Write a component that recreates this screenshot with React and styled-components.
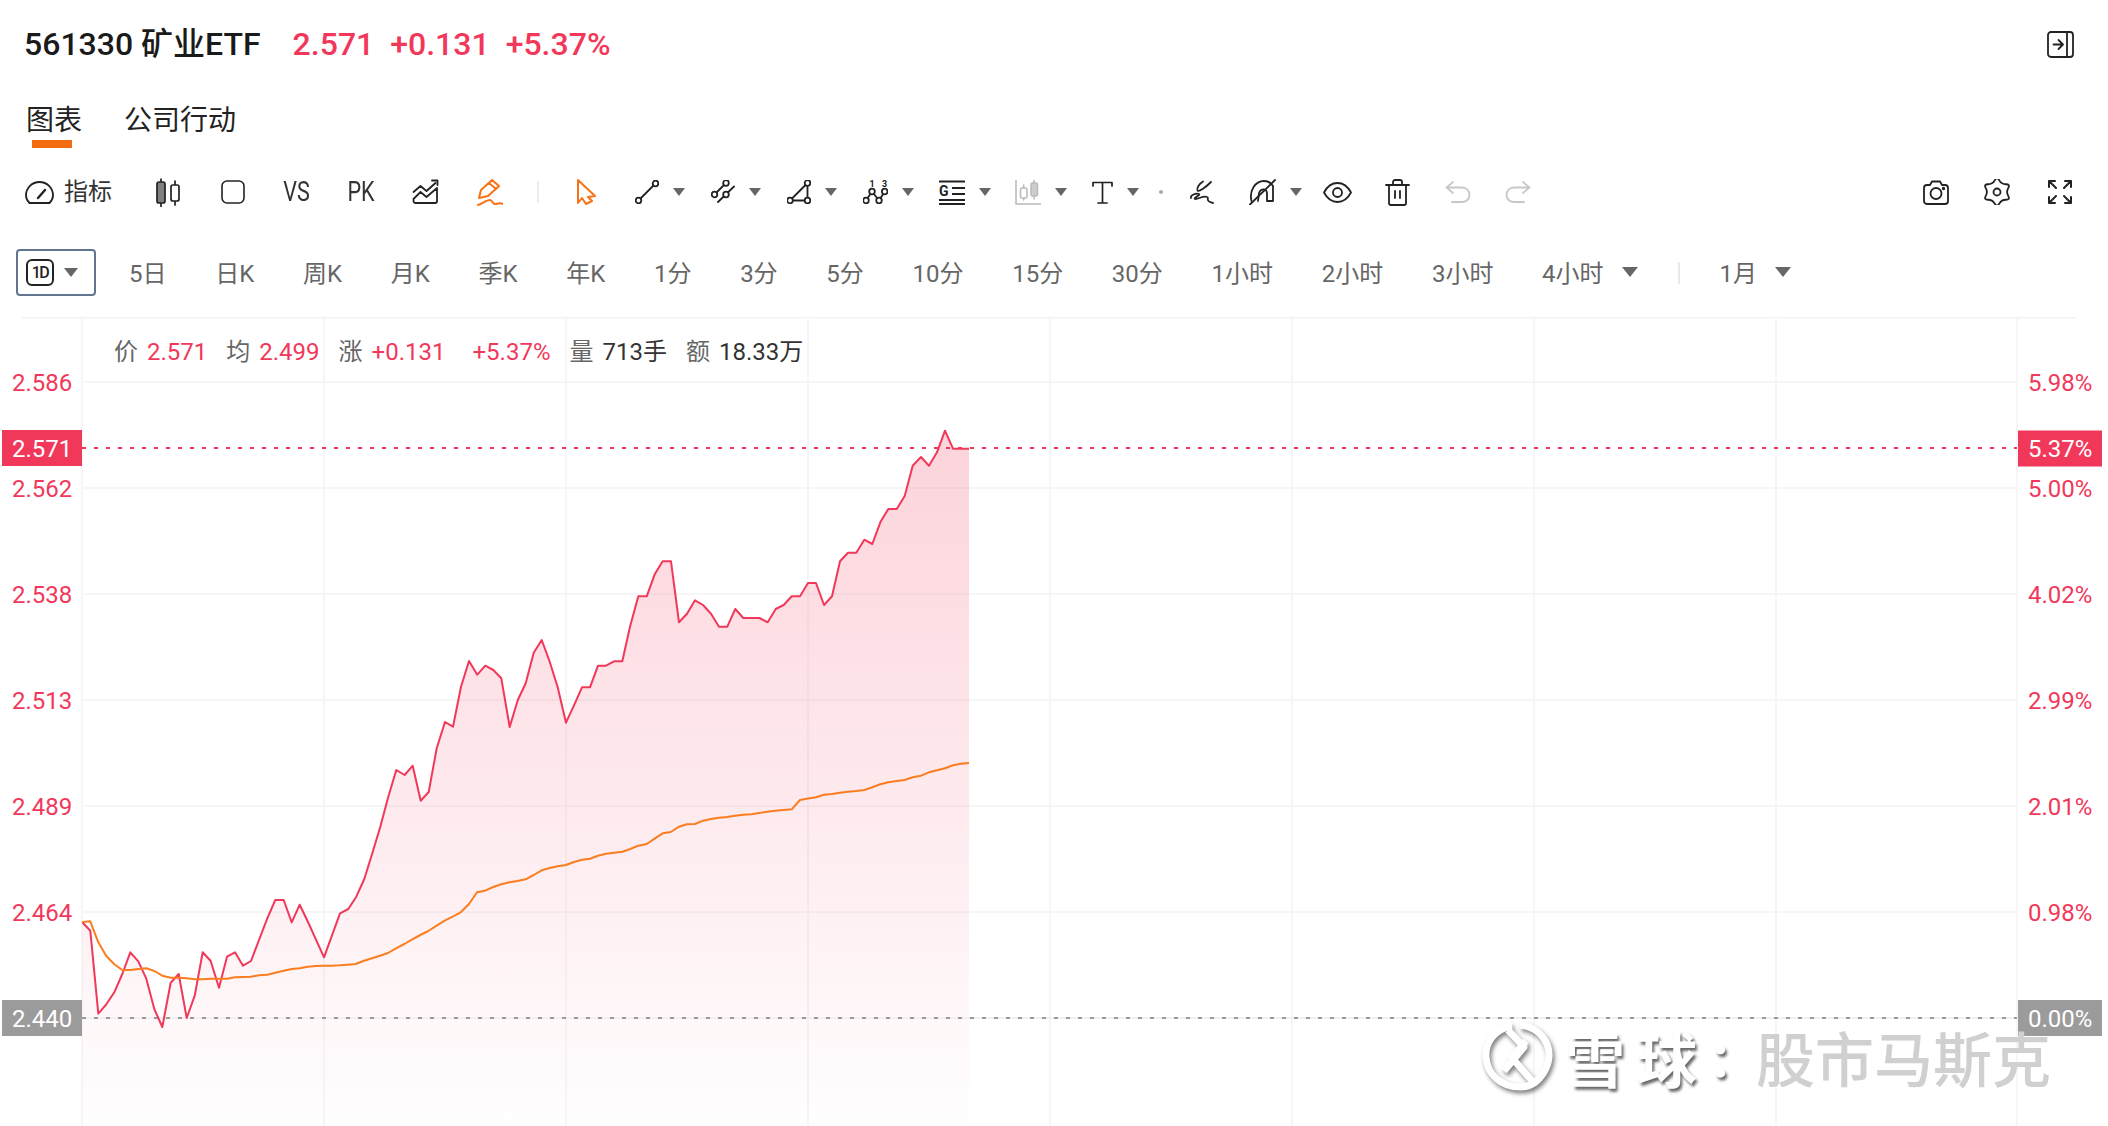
import React from 'react';
import styled, { createGlobalStyle } from 'styled-components';

const RED = '#f2385a';
const ORANGE = '#f97316';
const INK = '#222';
const MUTED = '#666';
const GRID = '#f3f3f3';

const GlobalStyle = createGlobalStyle`
  html, body {
    margin: 0;
    background: #fff;
  }
  body {
    font-family: Roboto, 'Noto Sans CJK SC', sans-serif;
    color: ${INK};
  }
`;

// chart data, read off the picture as x,y in page pixels
const fromCrop = (ox, oy, pts) => pts.map(([x, y]) => [ox + x / 3, oy + y / 3]);

const PRICE = [
  ...fromCrop(0, 820, [[247,307],[271,332],[295,581],[319,553],[343,517],[367,462],[391,397],[415,424],[439,476],[463,567],[487,621],[512,488],[536,462],[560,594],[584,527],[608,397],[632,423],[657,503],[681,410],[705,397],[729,437],[753,423],[777,360],[802,295],[826,240],[851,240],[875,307],[899,254]]),
  ...fromCrop(300, 560, [[24,1086],[48,1139],[72,1192],[120,1060],[145,1047],[169,1010],[193,957],[217,880],[241,800],[265,710],[289,630],[314,645],[338,617],[362,722],[386,696],[410,565],[435,486],[459,500],[483,380],[507,303],[532,344],[556,317],[580,330],[604,355],[629,501],[653,421],[677,370],[701,278],[725,240],[749,305],[773,382],[798,488],[822,436],[846,382],[870,382],[894,317],[918,317],[942,304],[967,304]]),
  ...fromCrop(620, 400, [[30,680],[55,589],[80,589],[104,523],[128,484],[153,484],[177,667],[201,641],[225,601],[249,615],[273,641],[297,680],[322,680],[346,627],[370,654],[394,654],[418,654],[443,667],[467,627],[491,615],[515,589],[540,589],[564,549],[588,549],[612,615],[636,589],[660,484],[684,458],[709,458],[733,419],[757,432],[781,367],[805,327],[830,327],[854,288],[878,197],[903,171],[927,197],[951,157],[975,92],[999,146],[1023,146],[1047,146]]),
];

const AVERAGE = [
  ...fromCrop(0, 820, [[247,306],[271,304],[295,367],[319,408],[343,433],[367,450],[391,450],[415,447],[439,445],[463,453],[487,467],[512,473],[536,473],[560,475],[584,478],[608,478],[632,476],[657,476],[681,476],[705,472],[729,471],[753,470],[777,466],[802,464],[826,458],[851,452],[875,447],[899,445],[923,440],[947,438],[971,437],[995,437],[1019,436],[1043,434],[1067,432],[1092,422],[1116,415],[1140,407],[1164,399],[1188,385],[1213,372],[1237,358],[1261,345],[1285,333],[1310,317],[1334,302],[1358,290],[1382,277],[1407,252]]),
  ...fromCrop(300, 560, [[531,997],[555,992],[580,981],[604,973],[628,967],[652,963],[677,958],[701,945],[725,931],[749,924],[773,919],[798,915],[822,906],[846,899],[870,896],[894,887],[918,881],[942,878],[967,875],[991,867],[1015,857],[1040,852],[1064,836],[1088,820],[1112,816],[1137,800],[1161,793],[1185,792],[1209,782],[1233,777],[1257,773],[1281,771],[1305,767],[1330,764],[1354,763],[1378,759],[1402,755],[1426,752],[1451,750],[1475,748]]),
  ...fromCrop(620, 400, [[540,1200],[560,1196],[588,1192],[612,1184],[636,1182],[660,1178],[684,1175],[709,1173],[733,1170],[757,1162],[781,1153],[805,1147],[830,1143],[854,1140],[878,1132],[903,1127],[927,1117],[951,1111],[975,1105],[999,1096],[1023,1091],[1047,1089]]),
];

const toPath = (pts) => pts.map(([x, y], i) => `${i ? 'L' : 'M'}${x.toFixed(1)} ${y.toFixed(1)}`).join('');

const H_LINES = [382, 488, 594, 700, 806, 912];
const V_LINES = [82, 324, 566, 808, 1050, 1292, 1534, 1776, 2017];
const LEFT_LABELS = [['2.586', 382], ['2.562', 488], ['2.538', 594], ['2.513', 700], ['2.489', 806], ['2.464', 912]];
const RIGHT_LABELS = [['5.98%', 382], ['5.00%', 488], ['4.02%', 594], ['2.99%', 700], ['2.01%', 806], ['0.98%', 912]];
const PERIODS = ['5日', '日K', '周K', '月K', '季K', '年K', '1分', '3分', '5分', '10分', '15分', '30分', '1小时', '2小时', '3小时'];

const Page = styled.div`
  width: 2108px;
  height: 1126px;
  overflow: hidden;
  background: #fff;
`;

const Header = styled.header`
  display: flex;
  align-items: center;
  height: 88px;
  padding: 0 34px 0 24px;
`;

const Title = styled.h1`
  margin: 0;
  font-size: 32px;
  font-weight: 500;
  line-height: 40px;
  height: 40px;
  color: #1a1a1a;
`;

const Quote = styled.div`
  display: flex;
  gap: 16px;
  margin-left: 32px;
  font-size: 32px;
  font-weight: 500;
  line-height: 40px;
  color: ${RED};
`;

const PanelButton = styled.div`
  display: flex;
  margin-left: auto;
`;

const Tabs = styled.nav`
  display: flex;
  gap: 42px;
  height: 49px;
  padding: 13px 0 0 26px;
`;

const Tab = styled.div`
  position: relative;
  height: 39px;
  font-size: 28px;
  line-height: 40px;
  color: ${INK};

  ${(p) =>
    p.$active &&
    `
    &::after {
      content: '';
      position: absolute;
      left: 6px;
      right: 10px;
      top: 39px;
      height: 8px;
      background: #f36d10;
    }
  `}
`;

const Toolbar = styled.div`
  display: flex;
  align-items: center;
  height: 56px;
  margin-top: 14px;
  padding: 0 16px 0 25px;
`;

const IndicatorButton = styled.div`
  display: flex;
  align-items: center;
  gap: 10px;
  width: 111px;
  font-size: 24px;
  line-height: 32px;
  color: #333;
`;

const IndicatorLabel = styled.span`
  margin-bottom: 1px;
`;

const ToolButton = styled.div`
  display: flex;
  align-items: center;
  justify-content: center;
  flex: none;
  width: ${(p) => p.$w || 61}px;
`;

const ToolText = styled.span`
  font-size: 27px;
  line-height: 32px;
  color: #333;
  transform: scaleX(0.8);
`;

const DropButton = styled.div`
  display: flex;
  align-items: center;
  flex: none;
  gap: 14px;
  width: ${(p) => p.$w || 76}px;
  padding-left: ${(p) => p.$pad || 13}px;
  box-sizing: border-box;
`;

const Caret = styled.span`
  flex: none;
  width: 0;
  height: 0;
  border-left: ${(p) => p.$size || 6}px solid transparent;
  border-right: ${(p) => p.$size || 6}px solid transparent;
  border-top: ${(p) => (p.$size || 6) + 2}px solid ${MUTED};
`;

const ToolDivider = styled.span`
  flex: none;
  width: 2px;
  height: 22px;
  margin: 0 10.5px 0 15px;
  background: #eee;
`;

const Dot = styled.span`
  flex: none;
  width: 4px;
  height: 4px;
  margin: 0 2.6px 0 4.5px;
  border-radius: 50%;
  background: #aaa;
`;

const RightTools = styled.div`
  display: flex;
  align-items: center;
  margin-left: auto;
`;

const PeriodBar = styled.div`
  display: flex;
  align-items: center;
  height: 47px;
  margin-top: 29px;
  padding-left: 16px;
  font-size: 24px;
  color: ${MUTED};
`;

const RangeBox = styled.div`
  display: flex;
  align-items: center;
  gap: 10px;
  width: 80px;
  height: 47px;
  margin-right: 33px;
  padding-left: 8px;
  box-sizing: border-box;
  border: 2px solid #62758f;
  border-radius: 4px;
`;

const DayBadge = styled.span`
  display: flex;
  align-items: center;
  justify-content: center;
  width: 28px;
  height: 27px;
  box-sizing: border-box;
  border: 2px solid ${INK};
  border-radius: 6px;
  font-size: 16px;
  font-weight: 500;
  letter-spacing: -1.5px;
  color: ${INK};
`;

const PeriodList = styled.div`
  display: flex;
  align-items: center;
  gap: 48.7px;
  margin-bottom: 2px;
`;

const PeriodMenu = styled.div`
  display: flex;
  align-items: center;
  gap: 18px;
  margin-bottom: ${(p) => p.$lift || 0}px;
`;

const PeriodDivider = styled.span`
  width: 2px;
  height: 22px;
  margin: 0 40px;
  background: #eaeaea;
`;

const Chart = styled.section`
  position: relative;
  height: 809px;
  margin-top: 21px;
`;

const ChartSvg = styled.svg`
  display: block;
`;

const AxisText = styled.text`
  font-family: Roboto, sans-serif;
  font-size: 24px;
  fill: ${(p) => p.$color || RED};
`;

const Legend = styled.div`
  position: absolute;
  left: 114px;
  top: 18px;
  display: flex;
  gap: 19px;
  font-size: 24px;
  line-height: 34px;
  color: ${MUTED};
`;

const LegendItem = styled.span`
  display: flex;
  gap: 9px;
  margin-left: ${(p) => p.$offset || 0}px;
`;

const LegendValue = styled.span`
  color: ${(p) => (p.$up ? RED : '#333')};
`;

const Watermark = styled.div`
  position: absolute;
  left: 1482px;
  top: 704px;
  display: flex;
  align-items: center;
  height: 70px;
  font-size: 60px;
  font-weight: 700;
  white-space: nowrap;
`;

const WatermarkBrand = styled.span`
  margin-left: 12px;
  letter-spacing: 12px;
  color: #fff;
  text-shadow: 2px 3px 3px rgba(0, 0, 0, 0.6);
`;

const WatermarkColon = styled.span`
  margin-left: 3px;
  color: #fff;
  text-shadow: 2px 3px 3px rgba(0, 0, 0, 0.6);
`;

const WatermarkName = styled.span`
  margin-left: 27px;
  font-size: 59px;
  font-weight: 500;
  color: #d0d0d0;
`;

const LogoSvg = styled.svg`
  flex: none;
  filter: drop-shadow(2px 3px 2px rgba(0, 0, 0, 0.5));
`;

const Icon = ({ w, h, color = INK, sw = 1.8, children }) => (
  <svg width={w} height={h} viewBox={`0 0 ${w} ${h}`} fill="none" stroke={color} strokeWidth={sw} strokeLinecap="round" strokeLinejoin="round">
    {children}
  </svg>
);

const PanelIcon = () => (
  <Icon w={27} h={27}>
    <rect x="1" y="1" width="25" height="25" rx="3" />
    <path d="M20 1v25M6.5 13.5h9M11.5 9l4.5 4.5-4.5 4.5" />
  </Icon>
);

const GaugeIcon = () => (
  <Icon w={29} h={23}>
    <path d="M4.5 22C2.500 20 1 17.500 1 14.500a13.500 13.500 0 0 1 27 0c0 3-1.500 5.500-3.500 7.500z" />
    <path d="M13 17l7-8" strokeWidth="2.400" />
  </Icon>
);

const CandleIcon = ({ color = INK, fill = '#808080' }) => (
  <Icon w={24} h={29} color={color} sw={1.7}>
    <path d="M5 1v28M19 3v24" />
    <rect x="1" y="4" width="8" height="21" rx="2" fill={fill} />
    <rect x="15" y="7" width="8" height="16" rx="2" fill="#fff" />
  </Icon>
);

const SquareIcon = () => (
  <Icon w={24} h={24} sw={1.6}>
    <rect x="1" y="1" width="22" height="22" rx="5" />
  </Icon>
);

const TrendIcon = () => (
  <Icon w={27} h={26}>
    <path d="M1.500 13l7-6 6 5 9-8M20 1.500h5.500V6" />
    <path d="M1.500 20l7-7 6 5 10.500-9v13a2 2 0 0 1-2 2H3.500a2 2 0 0 1-2-2z" />
  </Icon>
);

const PenIcon = () => (
  <Icon w={26} h={27} color={ORANGE} sw={2}>
    <path d="M2 19l2-8L15 1l7 6-11 10zM12 4l7 6" />
    <path d="M1 26c4-1 8-5 12-5 3 0 2 4 5 4s6-2 8 0" />
  </Icon>
);

const CursorIcon = () => (
  <Icon w={19} h={26} color={ORANGE} sw={2}>
    <path d="M1 1l17 16-7 1 4 4-6 3-4-6-4 5z" />
  </Icon>
);

const Node = ({ x, y }) => <circle cx={x} cy={y} r="2.800" fill="#fff" />;

const LineIcon = () => (
  <Icon w={24} h={24}>
    <path d="M3.500 20.500l17-17" />
    <Node x={3.5} y={20.5} />
    <Node x={20.5} y={3.5} />
  </Icon>
);

const ParallelIcon = () => (
  <Icon w={24} h={24}>
    <path d="M3.500 14.500L15 3M7 22L23 6.500" />
    <Node x={3.5} y={14.5} />
    <Node x={15} y={3} />
    <Node x={15} y={14.5} />
  </Icon>
);

const TriangleIcon = () => (
  <Icon w={24} h={24}>
    <path d="M3 20.500h17.500V3z" />
    <Node x={3} y={20.5} />
    <Node x={20.5} y={20.5} />
    <Node x={20.5} y={3} />
  </Icon>
);

const WaveIcon = () => (
  <Icon w={25} h={24}>
    <path d="M3 20.500l6-9 7 9 5.700-9" />
    <Node x={3} y={20.5} />
    <Node x={9} y={11.5} />
    <Node x={16} y={20.5} />
    <Node x={21.7} y={11.5} />
    <text x="9" y="7" fontSize="9" fontWeight="700" fontFamily="Roboto" textAnchor="middle" fill={INK} stroke="none">1</text>
    <text x="21.700" y="7" fontSize="9" fontWeight="700" fontFamily="Roboto" textAnchor="middle" fill={INK} stroke="none">3</text>
  </Icon>
);

const FibIcon = () => (
  <Icon w={26} h={25}>
    <path d="M0 1.500h26M13 8h13M13 14h13M0 20h26M0 24h26" strokeLinecap="butt" />
    <text x="0" y="16" fontSize="14" fontWeight="700" fontFamily="Roboto" fill={INK} stroke="none">G</text>
  </Icon>
);

const GrayCandleIcon = () => (
  <Icon w={26} h={25} color="#bbb" sw={1.6}>
    <path d="M1 0v24h25M8.700 5v15M19 0v19" />
    <rect x="5.500" y="8" width="6.500" height="10" rx="1.500" fill="#fff" />
    <rect x="16" y="3" width="6.500" height="13" rx="1.500" fill="#ccc" />
  </Icon>
);

const TextIcon = () => (
  <Icon w={21} h={23} sw={1.7}>
    <path d="M1 5V1.500h19V5M10.500 1.500V22M6 22h9" />
  </Icon>
);

const SquiggleIcon = () => (
  <Icon w={25} h={24}>
    <path d="M14 1.500C10 4 7.500 8 8.500 10.500 10 12 17 7 22 2" />
    <path d="M2 18c-1-3 5-5 8-4 2 1-8 5-3 5 4-.5 7-3.500 11-2 3 1-3 4 6 6" />
  </Icon>
);

const ArcIcon = () => (
  <Icon w={27} h={26}>
    <path d="M2.500 22C0 12 6 2 15 2c4 0 7 2 9 5v15h-6v-7c0-6-6-6-8-1l-1 8" />
    <path d="M1 25.500L26 1" />
  </Icon>
);

const EyeIcon = () => (
  <Icon w={29} h={21}>
    <path d="M1 10.500C5 3 10 1 14.500 1S24 3 28 10.500C24 18 19 20 14.500 20S5 18 1 10.500z" />
    <circle cx="14.500" cy="10.500" r="4.500" />
  </Icon>
);

const TrashIcon = () => (
  <Icon w={25} h={27}>
    <path d="M1 6h23M8 6V3a2 2 0 0 1 2-2h5a2 2 0 0 1 2 2v3" />
    <path d="M4 6v18a2 2 0 0 0 2 2h13a2 2 0 0 0 2-2V6M10 12v7M15 12v7" />
  </Icon>
);

const UndoIcon = ({ flip }) => (
  <Icon w={26} h={22} color="#c8c8c8">
    <g transform={flip ? 'matrix(-1 0 0 1 26 0)' : undefined}>
      <path d="M8 1L1.500 6.500 8 12M1.500 6.500H17c4.500 0 7.500 3.500 7.500 7.500s-3 7-7.500 7H7" />
    </g>
  </Icon>
);

const CameraIcon = () => (
  <Icon w={26} h={25}>
    <path d="M1 8a3 3 0 0 1 3-3h3l2-3.500h8L19 5h3a3 3 0 0 1 3 3v13a3 3 0 0 1-3 3H4a3 3 0 0 1-3-3z" />
    <circle cx="13" cy="13.500" r="5.500" />
    <circle cx="20.500" cy="8.500" r="0.800" fill={INK} />
  </Icon>
);

const gearPoints = Array.from({ length: 12 }, (_, k) => {
  const r = k % 2 ? 9 : 15.5;
  const a = (k * Math.PI) / 6 - Math.PI / 2;
  return [13 + r * Math.cos(a), 13 + r * Math.sin(a)];
});

const mid = (a, b) => `${((a[0] + b[0]) / 2).toFixed(2)} ${((a[1] + b[1]) / 2).toFixed(2)}`;

const gearPath =
  `M${mid(gearPoints[11], gearPoints[0])}` +
  gearPoints.map((p, i) => `Q${p[0].toFixed(2)} ${p[1].toFixed(2)} ${mid(p, gearPoints[(i + 1) % 12])}`).join('') +
  'Z';

const GearIcon = () => (
  <Icon w={26} h={26}>
    <path d={gearPath} />
    <circle cx="13" cy="13" r="3.500" />
  </Icon>
);

const FullscreenIcon = () => (
  <Icon w={24} h={24} sw={2}>
    <path d="M1 7V1h6M1 1l7 7M17 1h6v6M23 1l-7 7M1 17v6h6M1 23l7-7M23 17v6h-6M23 23l-7-7" />
  </Icon>
);

const Logo = () => (
  <LogoSvg width="71" height="70" viewBox="0 0 71 70" fill="none" stroke="#fff" strokeWidth="7" strokeLinejoin="round">
    <path d="M30 5C12 8 3 22 4 36c1 18 16 30 34 30 8 0 14-4 14-4L30 37l14-17" />
    <path d="M38 4c20 2 30 18 29 32-1 12-9 22-15 26" />
    <path d="M26 9l16 17-20 24" />
  </LogoSvg>
);

const PriceChart = () => {
  const linePath = toPath(PRICE);
  const areaPath = `${linePath}L969 1126L82.300 1126Z`;

  return (
    <ChartSvg width="2108" height="809" viewBox="0 317 2108 809">
      <defs>
        <linearGradient id="priceFill" gradientUnits="userSpaceOnUse" x1="0" y1="430" x2="0" y2="1126">
          <stop offset="0" stopColor={RED} stopOpacity="0.22" />
          <stop offset="1" stopColor={RED} stopOpacity="0.005" />
        </linearGradient>
      </defs>

      <path d="M22 317.500H2076" stroke={GRID} strokeWidth="2" />
      {H_LINES.map((y) => (
        <path key={y} d={`M82 ${y}H2017`} stroke={GRID} strokeWidth="1.500" />
      ))}
      {V_LINES.map((x) => (
        <path key={x} d={`M${x} 318V1126`} stroke={GRID} strokeWidth="1.500" />
      ))}

      <path d={areaPath} fill="url(#priceFill)" />
      <path d="M82 1018H2017" stroke="#f0f0f0" strokeWidth="2" />
      <path d="M82 1018H2017" stroke="#999" strokeWidth="2" strokeDasharray="4 8" />
      <path d="M82 448H2017" stroke={RED} strokeWidth="2" strokeDasharray="4 8" />
      <path d={linePath} fill="none" stroke={RED} strokeWidth="2" strokeLinejoin="round" />
      <path d={toPath(AVERAGE)} fill="none" stroke="#fb7d1f" strokeWidth="2" strokeLinejoin="round" />

      {LEFT_LABELS.map(([label, y]) => (
        <AxisText key={label} x="12" y={y + 8.5}>{label}</AxisText>
      ))}
      {RIGHT_LABELS.map(([label, y]) => (
        <AxisText key={label} x="2028" y={y + 8.5}>{label}</AxisText>
      ))}

      <rect x="2" y="430" width="80" height="36" fill={RED} />
      <AxisText x="12" y="456.500" $color="#fff">2.571</AxisText>
      <rect x="2018" y="430.500" width="84" height="36" fill={RED} />
      <AxisText x="2028" y="456.500" $color="#fff">5.37%</AxisText>
      <rect x="2" y="1000" width="80" height="36" fill="#9b9b9b" />
      <AxisText x="12" y="1026.500" $color="#fff">2.440</AxisText>
      <rect x="2018" y="1000" width="84" height="36" fill="#9b9b9b" />
      <AxisText x="2028" y="1026.500" $color="#fff">0.00%</AxisText>
    </ChartSvg>
  );
};

const App = () => (
  <Page>
    <GlobalStyle />
    <Header>
      <Title>561330 矿业ETF</Title>
      <Quote>
        <span>2.571</span>
        <span>+0.131</span>
        <span>+5.37%</span>
      </Quote>
      <PanelButton>
        <PanelIcon />
      </PanelButton>
    </Header>

    <Tabs>
      <Tab $active>图表</Tab>
      <Tab>公司行动</Tab>
    </Tabs>

    <Toolbar>
      <IndicatorButton>
        <GaugeIcon />
        <IndicatorLabel>指标</IndicatorLabel>
      </IndicatorButton>
      <ToolButton $w={64.4}><CandleIcon /></ToolButton>
      <ToolButton $w={64.4}><SquareIcon /></ToolButton>
      <ToolButton $w={64.4}><ToolText>VS</ToolText></ToolButton>
      <ToolButton $w={64.4}><ToolText>PK</ToolText></ToolButton>
      <ToolButton $w={64.4}><TrendIcon /></ToolButton>
      <ToolButton $w={64.4}><PenIcon /></ToolButton>
      <ToolDivider />
      <ToolButton $w={73}><CursorIcon /></ToolButton>
      <DropButton $pad={12}><LineIcon /><Caret /></DropButton>
      <DropButton $pad={12}><ParallelIcon /><Caret /></DropButton>
      <DropButton $pad={12}><TriangleIcon /><Caret /></DropButton>
      <DropButton $pad={12}><WaveIcon /><Caret /></DropButton>
      <DropButton $pad={12}><FibIcon /><Caret /></DropButton>
      <DropButton $pad={12}><GrayCandleIcon /><Caret /></DropButton>
      <DropButton><TextIcon /><Caret /></DropButton>
      <Dot />
      <ToolButton $w={70.4}><SquiggleIcon /></ToolButton>
      <DropButton $w={70.7}><ArcIcon /><Caret /></DropButton>
      <ToolButton><EyeIcon /></ToolButton>
      <ToolButton $w={59.6}><TrashIcon /></ToolButton>
      <ToolButton $w={60}><UndoIcon /></ToolButton>
      <ToolButton $w={60}><UndoIcon flip /></ToolButton>
      <RightTools>
        <ToolButton $w={60}><CameraIcon /></ToolButton>
        <ToolButton $w={62}><GearIcon /></ToolButton>
        <ToolButton $w={64}><FullscreenIcon /></ToolButton>
      </RightTools>
    </Toolbar>

    <PeriodBar>
      <RangeBox>
        <DayBadge>1D</DayBadge>
        <Caret $size={7.5} />
      </RangeBox>
      <PeriodList>
        {PERIODS.map((period) => (
          <span key={period}>{period}</span>
        ))}
        <PeriodMenu>
          4小时
          <Caret $size={8} />
        </PeriodMenu>
      </PeriodList>
      <PeriodDivider />
      <PeriodMenu $lift={2}>
        1月
        <Caret $size={8} />
      </PeriodMenu>
    </PeriodBar>

    <Chart>
      <PriceChart />
      <Legend>
        <LegendItem>价<LegendValue $up>2.571</LegendValue></LegendItem>
        <LegendItem>均<LegendValue $up>2.499</LegendValue></LegendItem>
        <LegendItem>涨<LegendValue $up>+0.131</LegendValue></LegendItem>
        <LegendItem $offset={8}><LegendValue $up>+5.37%</LegendValue></LegendItem>
        <LegendItem>量<LegendValue>713手</LegendValue></LegendItem>
        <LegendItem>额<LegendValue>18.33万</LegendValue></LegendItem>
      </Legend>
      <Watermark>
        <Logo />
        <WatermarkBrand>雪球</WatermarkBrand>
        <WatermarkColon>:</WatermarkColon>
        <WatermarkName>股市马斯克</WatermarkName>
      </Watermark>
    </Chart>
  </Page>
);

export default App;
